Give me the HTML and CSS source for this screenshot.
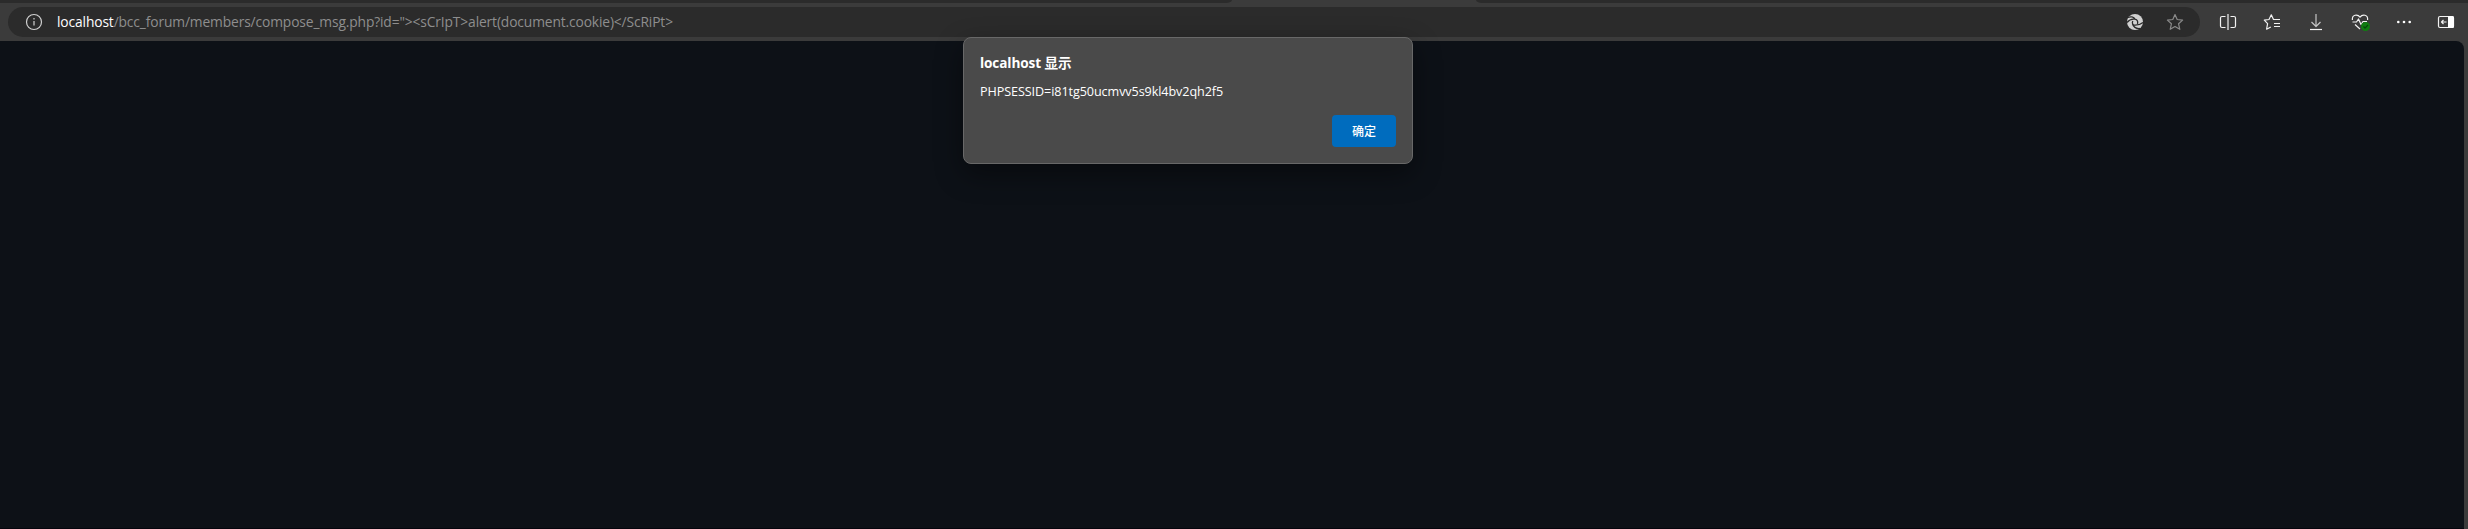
FILE: index.html
```html
<!DOCTYPE html>
<html lang="zh-CN">
<head>
<meta charset="utf-8">
<title>localhost</title>
<link rel="stylesheet" href="styles.css">
</head>
<body>
<div class="browser">
  <div class="tabstrip"><div class="tab tab-left"></div><div class="tab-active"></div><div class="tab tab-right"></div></div>
  <header class="toolbar">
    <div class="omnibox">
      <svg class="icon info" viewBox="0 0 18 18"><circle cx="9" cy="9" r="7.5"/><path d="M9 8v4.5M9 5v1.4"/></svg>
      <div class="url"><span class="host">localhost</span><span class="path">/bcc_forum/members/compose_msg.php?id="&gt;&lt;sCrIpT&gt;alert(document.cookie)&lt;/ScRiPt&gt;</span></div>
      <svg class="icon swirl" viewBox="0 0 18 18"><circle class="disc" cx="9" cy="9" r="8"/><path class="cut" d="M1.500 4.500C4.500 3.300 8 3.600 9 6.200M1 9.500C3 7 6 5.600 9 6.200C11.300 6.800 12 9 11.500 11M6.800 8C5.600 10.300 7 12.300 9.200 12.200C12 12.200 14.500 11.500 17 9.500M6.500 11C7.500 14 10.500 15.800 14 15.500"/></svg>
      <svg class="icon star" viewBox="0 0 18 18"><path d="M9 1.500l2.200 5 5.400.6-4 3.700 1.200 5.500L9 13.500l-4.800 2.800 1.200-5.500-4-3.700 5.400-.6z"/></svg>
    </div>
    <nav class="actions">
      <svg class="icon" viewBox="0 0 18 18"><path d="M6.500 3.500H3a1.500 1.500 0 0 0-1.500 1.500v8A1.500 1.500 0 0 0 3 14.500h3.500M11.500 3.500H15a1.500 1.500 0 0 1 1.500 1.500v8a1.500 1.500 0 0 1-1.500 1.500h-3.500M9 1v16"/></svg>
      <svg class="icon" viewBox="0 0 18 18"><path d="M12.200 6.500h-1.700L8.300 1.800 6 6.500l-4.700.7 3.300 3.500-1 5.500 4.200-2.200M10.500 6.500H17M11 10.500h6M11 13.500h6"/></svg>
      <svg class="icon" viewBox="0 0 18 18"><path class="soft" d="M9 1v12.500M4.500 9L9 13.500 13.500 9"/><path d="M3 16.500h12"/></svg>
      <svg class="icon" viewBox="0 0 18 18"><path d="M1.400 7C.8 1.500 6.500.8 9 4.200 11.500.8 17.200 1.500 16.600 7M1.500 9h4l2-3 2.500 5.500L12 8.500h4M4 11.500L9 16"/><circle class="ok" cx="14.500" cy="13.500" r="4.500"/><path class="tick" d="M12.500 13.500l1.500 1.500 3-3"/></svg>
      <svg class="icon" viewBox="0 0 18 18"><g class="dots"><circle cx="3.300" cy="9" r="1.300"/><circle cx="9" cy="9" r="1.300"/><circle cx="14.700" cy="9" r="1.300"/></g></svg>
      <svg class="icon" viewBox="0 0 18 18"><rect x="1.500" y="3.500" width="15" height="11" rx="1.500"/><path class="panel" d="M11 3h4.500A1.500 1.500 0 0 1 17 4.500v9a1.500 1.500 0 0 1-1.500 1.500H11z"/><path d="M9.500 9H4.500M6.500 7l-2 2 2 2"/></svg>
    </nav>
  </header>
  <main class="page"></main>
</div>
<section class="dialog" role="alertdialog">
  <h1 class="title">localhost <span class="zh">显示</span></h1>
  <p class="message">PHPSESSID=i81tg50ucmvv5s9kl4bv2qh2f5</p>
  <button class="confirm">确定</button>
</section>
</body>
</html>
```
FILE: styles.css
```css
* { box-sizing: border-box; }
body { margin: 0; overflow: hidden; background: #3b3b3b; font-family: "Open Sans", "Noto Sans CJK SC", sans-serif; }
.browser { width: 2468px; height: 529px; display: flex; flex-direction: column; }
.tabstrip { height: 3px; display: flex; background: #3b3b3b; }
.tab { background: #2b2b2b; }
.tab-left { width: 1232px; border-bottom-right-radius: 6px 3px; }
.tab-active { width: 244px; }
.tab-right { flex: 1; border-bottom-left-radius: 6px 3px; }
.toolbar { height: 38px; padding: 4px 13px 4px 8px; display: flex; align-items: center; }
.omnibox { width: 2192px; height: 30px; border-radius: 15px; background: #2b2b2b; display: flex; align-items: center; padding: 0 16px 0 17px; }
.icon { width: 18px; height: 18px; flex: none; overflow: visible; fill: none; stroke: #f2f2f2; stroke-width: 1.2; stroke-linejoin: round; }
.info { stroke: #d0d0d0; }
.url { flex: 1; padding-left: 14px; font-size: 13.8px; line-height: 20px; letter-spacing: -0.13px; white-space: nowrap; color: #8e8e8e; }
.host { color: #fff; }
.swirl .disc { fill: #d0d0d0; stroke: none; }
.swirl .cut { stroke: #2b2b2b; stroke-width: 1.3; }
.star { margin-left: 22px; stroke: #8a8a8a; }
.actions { flex: 1; display: grid; grid-template-columns: 44.500px 44px 44px 44px 42px 18px; padding-left: 18.500px; }
.soft { stroke: #c4c4c4; }
.ok { fill: #107c10; stroke: none; }
.tick { stroke: #07470b; }
.dots, .panel { fill: #fff; stroke: none; }
.page { flex: 1; margin-right: 4px; border-top-right-radius: 8px; background: #0d1117; border-bottom: 1px solid #05050d; }
.dialog { position: absolute; left: 963px; top: 37px; width: 450px; height: 127px; padding: 15px 16px 16px; border: 1px solid #686868; border-radius: 8px; background: #4a4a4a; color: #fff; box-shadow: 0 10px 28px rgba(0,0,0,.42); display: flex; flex-direction: column; }
.title { margin: 0; font-size: 13.600px; line-height: 20px; letter-spacing: -0.1px; font-weight: 700; white-space: nowrap; }
.message { margin: 9px 0 0; font-size: 12.600px; line-height: 20px; letter-spacing: -0.08px; white-space: nowrap; }
.confirm { align-self: flex-end; margin: 13px 0 0; width: 64px; height: 32px; padding: 0; border: 0; border-radius: 4px; background: #006cbe; color: #fff; font: 500 12px/32px "Noto Sans CJK SC", sans-serif; }
```
